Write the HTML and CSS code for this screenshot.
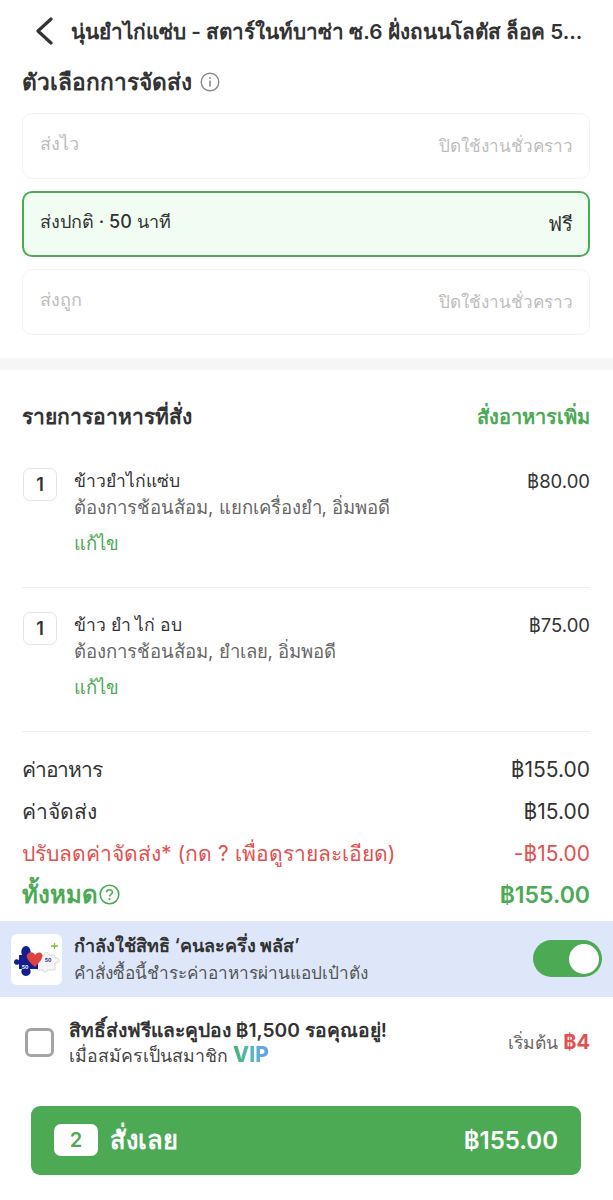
FILE: index.html
```html
<!DOCTYPE html>
<html lang="th">
<head>
    <meta charset="UTF-8">
    <meta name="viewport" content="width=device-width, initial-scale=1.0">
    <title>ตะกร้าสินค้า</title>
    <link rel="stylesheet" href="styles.css">
</head>
<body>
    <header class="top-bar">
        <svg class="back-icon" width="18" height="28" viewBox="0 0 18 28"><path d="M16 2 L3 14 L16 26" fill="none" stroke="#333" stroke-width="3.2" stroke-linecap="round" stroke-linejoin="round"/></svg>
        <h1 class="shop-name">นุ่นยำไก่แซ่บ - สตาร์ในท์บาซ่า ซ.6 ฝั่งถนนโลตัส ล็อค 5...</h1>
    </header>

    <section class="delivery">
        <h2 class="section-title">ตัวเลือกการจัดส่ง
            <svg class="info-icon" width="20" height="20" viewBox="0 0 20 20"><circle cx="10" cy="10" r="8.8" fill="none" stroke="#8a8a8a" stroke-width="1.4"/><rect x="9.2" y="8.6" width="1.6" height="6" fill="#8a8a8a"/><rect x="9.2" y="5.2" width="1.6" height="1.8" fill="#8a8a8a"/></svg>
        </h2>
        <div class="option disabled">
            <span class="option-name">ส่งไว</span>
            <span class="option-note">ปิดใช้งานชั่วคราว</span>
        </div>
        <div class="option selected">
            <span class="option-name">ส่งปกติ · 50 นาที</span>
            <span class="option-note">ฟรี</span>
        </div>
        <div class="option disabled">
            <span class="option-name">ส่งถูก</span>
            <span class="option-note">ปิดใช้งานชั่วคราว</span>
        </div>
    </section>

    <div class="band"></div>

    <section class="order">
        <div class="order-head">
            <h2 class="section-title">รายการอาหารที่สั่ง</h2>
            <a class="add-more" href="#">สั่งอาหารเพิ่ม</a>
        </div>

        <div class="item">
            <div class="qty">1</div>
            <div class="item-body">
                <div class="item-name">ข้าวยำไก่แซ่บ</div>
                <div class="item-desc">ต้องการช้อนส้อม, แยกเครื่องยำ, อิ่มพอดี</div>
                <a class="item-edit" href="#">แก้ไข</a>
            </div>
            <div class="item-price">฿80.00</div>
        </div>

        <div class="item">
            <div class="qty">1</div>
            <div class="item-body">
                <div class="item-name">ข้าว ยำ ไก่ อบ</div>
                <div class="item-desc">ต้องการช้อนส้อม, ยำเลย, อิ่มพอดี</div>
                <a class="item-edit" href="#">แก้ไข</a>
            </div>
            <div class="item-price">฿75.00</div>
        </div>
    </section>

    <section class="summary">
        <div class="row"><span class="tight">ค่าอาหาร</span><span>฿155.00</span></div>
        <div class="row"><span>ค่าจัดส่ง</span><span>฿15.00</span></div>
        <div class="row discount"><span>ปรับลดค่าจัดส่ง* (กด ? เพื่อดูรายละเอียด)</span><span>-฿15.00</span></div>
        <div class="row total">
            <span class="total-label">ทั้งหมด
                <svg width="21" height="21" viewBox="0 0 21 21"><circle cx="10.5" cy="10.5" r="9.3" fill="none" stroke="#4caa55" stroke-width="1.6"/><path d="M7.6 8.2 C7.8 4.9 13.4 4.9 13.4 8.2 C13.4 10.4 10.5 10.3 10.5 12.6" fill="none" stroke="#4caa55" stroke-width="1.6"/><rect x="9.6" y="14.2" width="1.8" height="1.8" fill="#4caa55"/></svg>
            </span>
            <span class="total-price">฿155.00</span>
        </div>
    </section>

    <section class="privilege">
        <div class="logo">
            <svg width="51" height="51" viewBox="0 0 51 51">
                <path d="M27 22 H33 C32 18 38 17 38 21 H44 V24 C49 23 50 30 44 29 V36 H36 C36 39 31 39 32 36 H26 Z" fill="#f6f6f6" stroke="#c4c4c4" stroke-width="0.6"/>
                <path d="M5 21 H11 C9 16 12 12 15 12 C18 12 21 16 19 21 H27 V35 H19 C21 39 18 42 15 42 C12 42 9 39 11 35 H8 V30 C5 32 3 30 3 28 C3 26 5 24 8 26 V21 Z" fill="#141e8c"/>
                <path d="M24 33 C18 28 15 24 16 21 C18 17 23 18 24 21 C25.500 18 31 17 31.500 21.500 C31.500 25 27 30 24 33 Z" fill="#e04040"/>
                <path d="M40 12 H47 M43.500 9 V15" stroke="#8ab53a" stroke-width="1.3"/>
                <text class="logo-num logo-num-white" x="14" y="35">50</text>
                <text class="logo-num logo-num-blue" x="37" y="28">50</text>
            </svg>
        </div>
        <div class="privilege-text">
            <div class="privilege-title">กำลังใช้สิทธิ ‘คนละครึ่ง พลัส’</div>
            <div class="privilege-desc">คำสั่งซื้อนี้ชำระค่าอาหารผ่านแอปเป๋าตัง</div>
        </div>
        <div class="toggle"><span class="knob"></span></div>
    </section>

    <section class="member">
        <div class="checkbox"></div>
        <div class="member-text">
            <div class="member-title">สิทธิ์ส่งฟรีและคูปอง ฿1,500 รอคุณอยู่!</div>
            <div class="member-desc">เมื่อสมัครเป็นสมาชิก <span class="vip">VIP</span></div>
        </div>
        <div class="member-price">เริ่มต้น <b>฿4</b></div>
    </section>

    <div class="footer-bar">
        <button class="order-button">
            <span class="count">2</span>
            <span class="order-label">สั่งเลย</span>
            <span class="order-total">฿155.00</span>
        </button>
    </div>
</body>
</html>
```

FILE: styles.css
```css
body {
    font-family: Inter, "Noto Sans", "DejaVu Sans", sans-serif;
    margin: 0;
    padding: 0;
    background-color: #fff;
    color: #333;
}
h1, h2 {
    margin: 0;
}
a {
    text-decoration: none;
}
.top-bar {
    display: flex;
    align-items: center;
    height: 62px;
    padding-left: 35px;
    gap: 18px;
}
.shop-name {
    font-size: 20.7px;
    font-weight: 600;
    white-space: nowrap;
    overflow: hidden;
}
.delivery {
    padding: 0 23px 23px 22px;
}
.section-title {
    display: flex;
    align-items: center;
    gap: 8px;
    font-size: 21px;
    font-weight: 600;
    line-height: 40px;
}
.delivery .section-title {
    font-size: 22.7px;
    margin-bottom: 11px;
}
.option {
    display: flex;
    justify-content: space-between;
    height: 66px;
    box-sizing: border-box;
    padding: 0 16px 0 17px;
    margin-bottom: 12px;
    border: 1px solid #f3f3f3;
    border-radius: 10px;
    align-items: center;
}
.option:last-child {
    margin-bottom: 0;
}
.option-name {
    font-size: 18px;
    margin-top: -6px;
}
.option-note {
    font-size: 17.1px;
}
.disabled {
    color: #bdbdbd;
}
.selected {
    background-color: #f1fdf3;
    border: 2px solid #4caa55;
    padding: 0 15px 0 16px;
    font-weight: 500;
}
.selected .option-note {
    font-size: 20px;
}
.band {
    height: 12px;
    background-color: #f6f6f6;
}
.order {
    padding: 0 23px 0 22px;
}
.order-head {
    display: flex;
    justify-content: space-between;
    align-items: center;
    padding-top: 27px;
    padding-bottom: 6px;
}
.add-more {
    color: #4caa55;
    font-size: 20px;
    font-weight: 600;
}
.item {
    display: flex;
    align-items: flex-start;
    padding: 24px 0 0;
    border-bottom: 1px solid #eee;
    height: 144px;
    box-sizing: border-box;
}
.order-head + .item {
    padding-top: 25px;
    height: 145px;
}
.qty {
    width: 34px;
    height: 33px;
    box-sizing: border-box;
    border: 1.5px solid #e4e4e4;
    border-radius: 7px;
    font-size: 18px;
    font-weight: 600;
    line-height: 32px;
    text-align: center;
    margin: 0 17px 0 1px;
}
.item-body {
    flex: 1;
}
.item-name {
    font-size: 17.5px;
    font-weight: 500;
    line-height: 26px;
}
.item-desc {
    font-size: 18.5px;
    line-height: 27px;
    color: #666;
}
.item-edit {
    display: block;
    margin-top: 9px;
    font-size: 18.5px;
    line-height: 27px;
    color: #4caa55;
    font-weight: 500;
}
.item-price {
    font-size: 18.5px;
    line-height: 27px;
}
.summary {
    padding: 17px 23px 5px 22px;
}
.row {
    display: flex;
    justify-content: space-between;
    align-items: center;
    height: 41.7px;
    font-size: 21px;
}
.tight {
    letter-spacing: -1.2px;
}
.discount {
    color: #e25050;
}
.total {
    color: #4caa55;
    font-size: 24px;
    font-weight: 600;
}
.total-price {
    font-size: 23px;
}
.total-label {
    display: flex;
    align-items: center;
    gap: 1px;
}
.privilege {
    display: flex;
    align-items: center;
    height: 76px;
    background-color: #dee7fa;
    padding: 0 11px;
}
.logo {
    width: 51px;
    height: 51px;
    background-color: #fff;
    border-radius: 6px;
    margin: 1px 12px 0 0;
}
.logo-num {
    font-size: 5px;
    font-weight: 700;
    text-anchor: middle;
}
.logo-num-white {
    fill: #fff;
}
.logo-num-blue {
    fill: #141e8c;
}
.privilege-text {
    flex: 1;
}
.privilege-title {
    font-size: 18px;
    font-weight: 600;
    line-height: 27px;
}
.privilege-desc {
    font-size: 17.2px;
    line-height: 27px;
    color: #555;
}
.toggle {
    display: flex;
    justify-content: flex-end;
    align-items: center;
    width: 69px;
    height: 37px;
    box-sizing: border-box;
    padding: 3px;
    background-color: #4caa55;
    border-radius: 19px;
}
.knob {
    width: 30px;
    height: 30px;
    background-color: #fff;
    border-radius: 50%;
}
.member {
    display: flex;
    align-items: center;
    box-sizing: border-box;
    height: 84px;
    padding: 8px 23px 0 25px;
}
.checkbox {
    width: 29px;
    height: 29px;
    box-sizing: border-box;
    border: 3px solid #a4a4a4;
    border-radius: 6px;
    margin-right: 15px;
}
.member-text {
    flex: 1;
}
.member-title {
    font-size: 19.2px;
    font-weight: 600;
    line-height: 25px;
    white-space: nowrap;
}
.member-desc {
    font-size: 17.7px;
    line-height: 25px;
    color: #444;
}
.vip {
    font-size: 21px;
    font-weight: 800;
    line-height: 1;
    background: linear-gradient(90deg, #45b36b, #5bb8c8 55%, #6b9cf0);
    -webkit-background-clip: text;
    background-clip: text;
    color: transparent;
}
.member-price {
    font-size: 17.5px;
    color: #666;
    white-space: nowrap;
}
.member-price b {
    font-size: 20px;
    color: #e25050;
}
.footer-bar {
    padding: 25px 32px 0 31px;
}
.order-button {
    display: flex;
    align-items: center;
    width: 100%;
    height: 69px;
    padding: 0 23px;
    border: none;
    border-radius: 9px;
    background-color: #4caa55;
    color: #fff;
    font-family: inherit;
}
.count {
    width: 44px;
    height: 32px;
    line-height: 32px;
    border-radius: 7px;
    background-color: #fff;
    color: #4caa55;
    font-size: 20px;
    font-weight: 600;
    margin-right: 12px;
}
.order-label {
    flex: 1;
    text-align: left;
    font-size: 25.5px;
    font-weight: 600;
}
.order-total {
    font-size: 24px;
    font-weight: 600;
}
```
